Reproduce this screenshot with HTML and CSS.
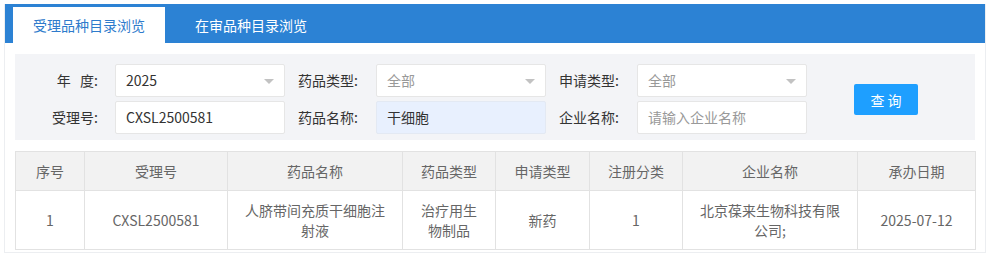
FILE: index.html
```html
<!DOCTYPE html>
<html lang="zh-CN">
<head>
<meta charset="utf-8">
<title>受理品种目录浏览</title>
<link rel="stylesheet" href="styles.css">
</head>
<body>
<div class="wrap">
  <div class="tabs">
    <div class="tab active">受理品种目录浏览</div>
    <div class="tab">在审品种目录浏览</div>
  </div>
  <div class="panel">
    <div class="grid">
      <label class="lab lab-first">年&nbsp;&nbsp;&nbsp;度:</label>
      <div class="inp sel">2025<span class="arrow"></span></div>
      <label class="lab">药品类型:</label>
      <div class="inp sel muted">全部<span class="arrow"></span></div>
      <label class="lab">申请类型:</label>
      <div class="inp sel muted">全部<span class="arrow"></span></div>
      <div class="btn-cell"><button class="btn">查 询</button></div>

      <label class="lab lab-first">受理号:</label>
      <div class="inp">CXSL2500581</div>
      <label class="lab">药品名称:</label>
      <div class="inp filled">干细胞</div>
      <label class="lab">企业名称:</label>
      <div class="inp muted">请输入企业名称</div>
    </div>
  </div>
  <table class="tbl">
    <colgroup>
      <col class="c1"><col class="c2"><col class="c3"><col class="c4">
      <col class="c5"><col class="c6"><col class="c7"><col class="c8">
    </colgroup>
    <thead>
      <tr><th>序号</th><th>受理号</th><th>药品名称</th><th>药品类型</th><th>申请类型</th><th>注册分类</th><th>企业名称</th><th>承办日期</th></tr>
    </thead>
    <tbody>
      <tr><td>1</td><td>CXSL2500581</td><td>人脐带间充质干细胞注射液</td><td>治疗用生物制品</td><td>新药</td><td>1</td><td>北京葆来生物科技有限公司;</td><td>2025-07-12</td></tr>
    </tbody>
  </table>
</div>
</body>
</html>
```
FILE: styles.css
```css
* { box-sizing: border-box; }
html, body { margin: 0; padding: 0; background: #fff; }
body {
  font-family: "Noto Sans CJK SC", "Microsoft YaHei", sans-serif;
  font-size: 14px;
  color: #333;
}
.wrap {
  margin: 4px 4px 0 4px;
  border: 1px solid #eceef1;
  border-top: none;
  height: 249px;
}
.tabs {
  background: #2c82d4;
  height: 39px;
  padding: 3px 0 0 8px;
  display: flex;
}
.tab {
  height: 36px;
  line-height: 36px;
  padding: 0 20px;
  color: #fff;
  font-size: 14px;
  margin-right: 10px;
}
.tab.active {
  background: #fff;
  color: #2e7bcc;
}
.panel {
  margin: 11px 10px 0 10px;
  background: #f3f4f7;
  height: 86px;
  padding: 10px 0 0 0;
}
.grid {
  display: grid;
  grid-template-columns: 100px 170px 91px 170px 91px 170px 1fr;
  grid-template-rows: 33px 33px;
  row-gap: 4px;
}
.lab {
  text-align: right;
  padding-right: 18px;
  line-height: 33px;
  color: #333;
}
.lab-first { padding-right: 17px; }
.inp {
  background: #fff;
  border: 1px solid #e6e6e6;
  border-radius: 2px;
  line-height: 31px;
  padding-left: 10px;
  font-size: 14px;
  color: #333;
  position: relative;
}
.inp.muted { color: #999; }
.inp.filled { background: #e8f0fe; border-color: #e3e9f3; }
.arrow {
  position: absolute;
  right: 10px;
  top: 14px;
  width: 0; height: 0;
  border-left: 5px solid transparent;
  border-right: 5px solid transparent;
  border-top: 5px solid #c2c2c2;
}
.btn-cell {
  grid-row: 1 / span 2;
  grid-column: 7;
  display: flex;
  align-items: center;
  padding-left: 47px;
  padding-top: 1px;
}
.btn {
  width: 64px;
  height: 31px;
  border: none;
  border-radius: 2px;
  background: #1e9fff;
  color: #fff;
  font-family: inherit;
  font-size: 14px;
  padding: 0;
}
.tbl {
  margin: 11px 10px 0 10px;
  width: 960px;
  border-collapse: collapse;
  table-layout: fixed;
  color: #666;
  font-size: 14px;
}
.c1 { width: 69px; }
.c2 { width: 143px; }
.c3 { width: 175px; }
.c4 { width: 93px; }
.c5 { width: 94px; }
.c6 { width: 93px; }
.c7 { width: 175px; }
.c8 { width: 118px; }
.tbl th, .tbl td {
  border: 1px solid #e2e2e2;
  text-align: center;
  font-weight: normal;
  padding: 0 15px;
  line-height: 20px;
}
.tbl th {
  background: #f2f2f2;
  height: 39px;
}
.tbl td {
  height: 59px;
}
```
